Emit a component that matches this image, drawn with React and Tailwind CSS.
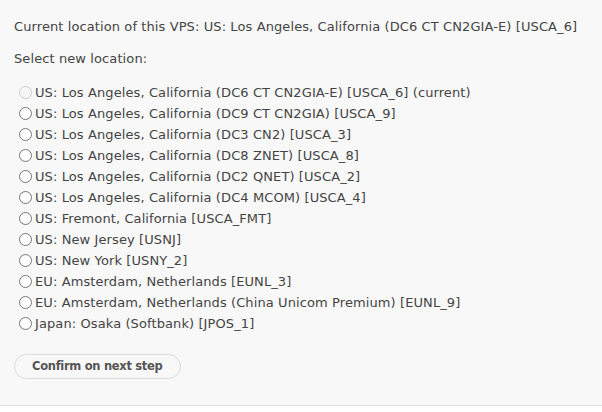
const locations = [
  { label: 'US: Los Angeles, California (DC6 CT CN2GIA-E) [USCA_6] (current)', disabled: true },
  { label: 'US: Los Angeles, California (DC9 CT CN2GIA) [USCA_9]' },
  { label: 'US: Los Angeles, California (DC3 CN2) [USCA_3]' },
  { label: 'US: Los Angeles, California (DC8 ZNET) [USCA_8]' },
  { label: 'US: Los Angeles, California (DC2 QNET) [USCA_2]' },
  { label: 'US: Los Angeles, California (DC4 MCOM) [USCA_4]' },
  { label: 'US: Fremont, California [USCA_FMT]' },
  { label: 'US: New Jersey [USNJ]' },
  { label: 'US: New York [USNY_2]' },
  { label: 'EU: Amsterdam, Netherlands [EUNL_3]' },
  { label: 'EU: Amsterdam, Netherlands (China Unicom Premium) [EUNL_9]' },
  { label: 'Japan: Osaka (Softbank) [JPOS_1]' },
];

export default function App() {
  return (
    <div className="min-h-[412px] w-[602px] bg-white font-['DejaVu_Sans',Verdana,sans-serif] text-[13px] tracking-[0.1px] text-[#444]">
      <div className="h-[406px] border-b border-[#dedede] bg-[#f8f8f8] px-[14px] pt-[16px]">
        <p className="mb-[11px] leading-[21px]">
          Current location of this VPS: US: Los Angeles, California (DC6 CT CN2GIA-E) [USCA_6]
        </p>
        <p className="mb-[13px] leading-[21px]">Select new location:</p>

        <div className="flex flex-col">
          {locations.map((loc, i) => (
            <label key={i} className="flex h-[21px] items-center leading-[21px]">
              <input
                type="radio"
                name="location"
                disabled={loc.disabled}
                className="ml-[5px] mr-[3px] h-[13px] w-[13px]"
              />
              <span>{loc.label}</span>
            </label>
          ))}
        </div>

        <button className="mt-[20px] h-[25px] rounded-full border border-[#dcdcdc] bg-[#f8f8f8] px-[17px] text-[11.5px] font-bold tracking-[-0.3px] text-[#555]">
          Confirm on next step
        </button>
      </div>
    </div>
  );
}
